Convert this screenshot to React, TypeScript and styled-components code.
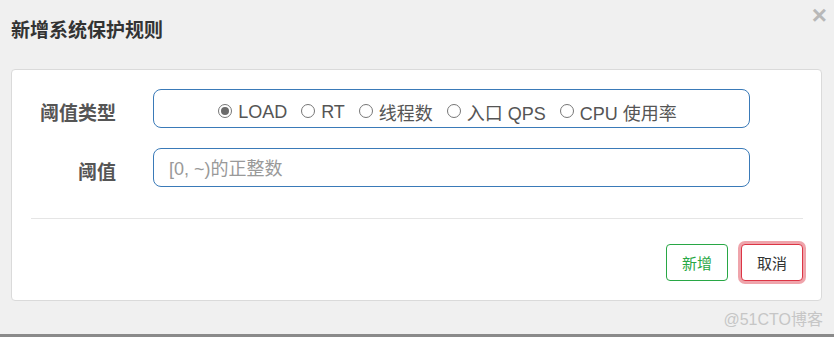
import React from "react";
import styled, { createGlobalStyle, css } from "styled-components";

const Global = createGlobalStyle`
  html, body { margin: 0; padding: 0; background: #f0f0f0; }
  body { font-family: "Liberation Sans", "Noto Sans CJK SC", sans-serif; }
  * { box-sizing: border-box; }
`;

const Page = styled.div`
  width: 834px;
  height: 337px;
  display: flex;
  flex-direction: column;
  background: #f0f0f0;
  overflow: hidden;
`;

const Header = styled.div`
  height: 69px;
  display: flex;
  justify-content: space-between;
  align-items: flex-start;
  padding: 0 7px 0 11px;
`;

const Title = styled.h4`
  margin: 17px 0 0;
  font-size: 19px;
  line-height: 24px;
  font-weight: bold;
  color: #333;
  font-family: "Noto Sans CJK SC", sans-serif;
`;

const Close = styled.span`
  margin-top: 2px;
  font-size: 26px;
  line-height: 26px;
  font-weight: bold;
  color: #b8b8b8;
  font-family: "Liberation Sans", sans-serif;
`;

const Card = styled.div`
  margin-left: 11px;
  width: 811px;
  height: 232px;
  background: #fff;
  border: 1px solid #dadada;
  border-radius: 4px;
  display: flex;
  flex-direction: column;
`;

const Form = styled.div`
  display: flex;
  flex-direction: column;
  gap: 20px;
  padding-top: 19px;
`;

const Row = styled.div`
  display: grid;
  grid-template-columns: 104px 597px;
  column-gap: 37px;
  align-items: center;
`;

const Label = styled.label`
  text-align: right;
  font-size: 19px;
  font-weight: bold;
  color: #555;
  font-family: "Noto Sans CJK SC", sans-serif;
  padding-top: 5px;
`;

const fieldBox = css`
  height: 39px;
  border: 1px solid #3a7ab8;
  border-radius: 8px;
  background: #fff;
`;

const RadioBox = styled.div`
  ${fieldBox};
  display: flex;
  align-items: center;
  justify-content: center;
  gap: 14px;
  padding: 7px 8px 0 0;
`;

const RadioItem = styled.label`
  display: flex;
  align-items: center;
  gap: 6px;
  font-size: 18px;
  color: #555;
`;

const Dot = styled.span<{ $checked?: boolean }>`
  width: 14px;
  height: 14px;
  margin-top: -3px;
  border-radius: 50%;
  border: 1px solid #767676;
  display: flex;
  align-items: center;
  justify-content: center;
  &::after {
    content: "";
    width: 8px;
    height: 8px;
    border-radius: 50%;
    background: ${(p) => (p.$checked ? "#6a6a6a" : "transparent")};
  }
`;

const Input = styled.input`
  ${fieldBox};
  width: 597px;
  padding: 3px 15px 0;
  font-size: 18px;
  font-family: "Liberation Sans", "Noto Sans CJK SC", sans-serif;
  color: #555;
  outline: none;
  &::placeholder { color: #999; }
`;

const Divider = styled.div`
  height: 1px;
  background: #e5e5e5;
  margin: 31px 18px 0 19px;
`;

const Footer = styled.div`
  display: flex;
  justify-content: flex-end;
  gap: 13px;
  padding: 25px 18px 0;
`;

const Button = styled.button<{ $variant: "success" | "danger" }>`
  width: 62px;
  height: 37px;
  border-radius: 4px;
  background: #fff;
  font-size: 15px;
  font-family: "Noto Sans CJK SC", sans-serif;
  cursor: pointer;
  ${(p) =>
    p.$variant === "success"
      ? css`
          border: 1px solid #28a745;
          color: #28a745;
        `
      : css`
          border: 1px solid #dc3545;
          color: #333;
          box-shadow: 0 0 0 3px rgba(220, 53, 69, 0.45);
        `}
`;

const WatermarkRow = styled.div`
  height: 33px;
  display: flex;
  justify-content: flex-end;
  align-items: center;
  padding-right: 11px;
`;

const Watermark = styled.span`
  font-size: 16px;
  color: #c6c6c6;
`;

const BottomBar = styled.div`
  height: 3px;
  background: #8a8a8a;
`;

const options = ["LOAD", "RT", "线程数", "入口 QPS", "CPU 使用率"];

export default function App() {
  return (
    <Page>
      <Global />
      <Header>
        <Title>新增系统保护规则</Title>
        <Close>×</Close>
      </Header>
      <Card>
        <Form>
          <Row>
            <Label>阈值类型</Label>
            <RadioBox>
              {options.map((o, i) => (
                <RadioItem key={o}>
                  <Dot $checked={i === 0} />
                  {o}
                </RadioItem>
              ))}
            </RadioBox>
          </Row>
          <Row>
            <Label>阈值</Label>
            <Input placeholder="[0, ~)的正整数" />
          </Row>
        </Form>
        <Divider />
        <Footer>
          <Button $variant="success">新增</Button>
          <Button $variant="danger">取消</Button>
        </Footer>
      </Card>
      <WatermarkRow>
        <Watermark>@51CTO博客</Watermark>
      </WatermarkRow>
      <BottomBar />
    </Page>
  );
}
